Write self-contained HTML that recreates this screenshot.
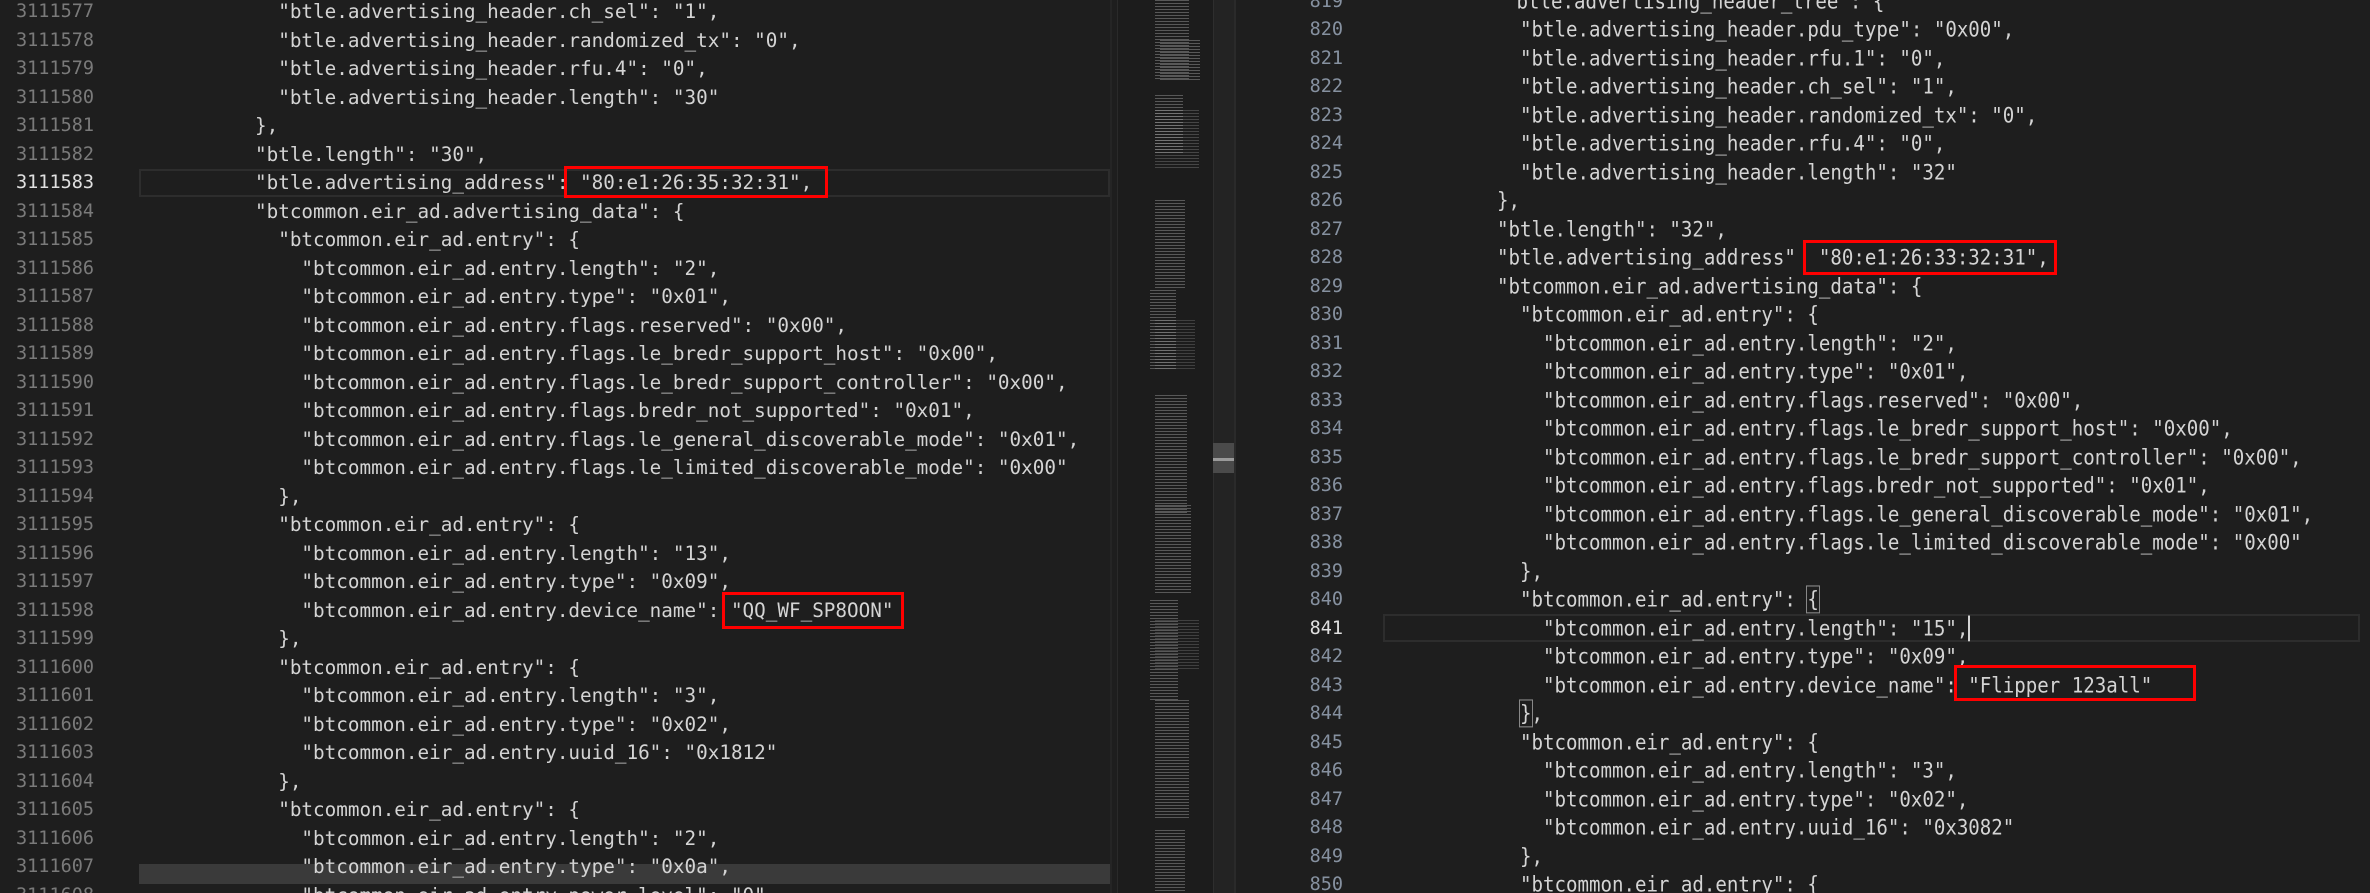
<!DOCTYPE html>
<html><head><meta charset="utf-8"><style>
html,body{margin:0;padding:0;background:#1e1e1e;width:2370px;height:893px;overflow:hidden;position:relative}
.l{position:absolute;height:28.5px;line-height:28.5px;white-space:pre;font-family:"DejaVu Sans Mono","Liberation Mono",monospace;color:#d4d4d4}
.L{font-size:19.3px}
.R{font-size:19.1px;transform:scaleY(1.12);transform-origin:0 50%}
.n{position:absolute;height:28.5px;line-height:28.5px;text-align:right;font-family:"DejaVu Sans Mono","Liberation Mono",monospace;color:#7a7a7a;font-size:18.5px}
.nr{color:#8691a0}
.cur{color:#e0e0e0}
.box{position:absolute;border:3px solid #ff0000;box-sizing:border-box}
.mm{position:absolute;left:1155px;width:40px;background:repeating-linear-gradient(to bottom,rgba(200,200,200,.35) 0 1px,transparent 1px 3px)}
</style></head><body>
<!-- left pane -->
<div style="position:absolute;left:139px;top:169px;width:971px;height:28px;border:2px solid #2d2d2d;box-sizing:border-box"></div>
<div style="position:absolute;left:139px;top:864px;width:971px;height:20px;background:#3a3a3a"></div>
<div style="position:absolute;left:1110px;top:0;width:2px;height:893px;background:#252525"></div>
<div style="position:absolute;left:1117px;top:0;width:96px;height:893px;background:#1c1c1c;border-left:1px solid #2a2a2a"></div>
<div class="mm" style="top:0;height:80px;width:34px"></div>
<div class="mm" style="top:40px;height:40px;left:1160px;width:40px"></div>
<div class="mm" style="top:95px;height:60px;width:28px"></div>
<div class="mm" style="top:110px;height:60px;width:44px;opacity:.7"></div>
<div class="mm" style="top:200px;height:90px;width:30px"></div>
<div class="mm" style="top:290px;height:80px;width:26px;left:1150px"></div>
<div class="mm" style="top:320px;height:50px;width:40px;opacity:.6"></div>
<div class="mm" style="top:395px;height:120px;width:32px"></div>
<div class="mm" style="top:505px;height:90px;width:36px"></div>
<div class="mm" style="top:600px;height:100px;width:28px;left:1150px"></div>
<div class="mm" style="top:620px;height:50px;width:44px;opacity:.6"></div>
<div class="mm" style="top:700px;height:120px;width:34px"></div>
<div class="mm" style="top:830px;height:63px;width:30px"></div>
<div style="position:absolute;left:1213px;top:0;width:21px;height:893px;background:#232323;border-left:1px solid #2e2e2e"></div>
<div style="position:absolute;left:1213px;top:443px;width:21px;height:30px;background:#4a4a4a"></div>
<div style="position:absolute;left:1213px;top:458px;width:21px;height:3px;background:#9a9a9a"></div>
<div style="position:absolute;left:1234px;top:0;width:2px;height:893px;background:#2a2a2a"></div>

<div class="n" style="left:0;width:94px;top:-2px">3111577</div>
<div class="n" style="left:0;width:94px;top:26.5px">3111578</div>
<div class="n" style="left:0;width:94px;top:55px">3111579</div>
<div class="n" style="left:0;width:94px;top:83.5px">3111580</div>
<div class="n" style="left:0;width:94px;top:112px">3111581</div>
<div class="n" style="left:0;width:94px;top:140.5px">3111582</div>
<div class="n cur" style="left:0;width:94px;top:169px">3111583</div>
<div class="n" style="left:0;width:94px;top:197.5px">3111584</div>
<div class="n" style="left:0;width:94px;top:226px">3111585</div>
<div class="n" style="left:0;width:94px;top:254.5px">3111586</div>
<div class="n" style="left:0;width:94px;top:283px">3111587</div>
<div class="n" style="left:0;width:94px;top:311.5px">3111588</div>
<div class="n" style="left:0;width:94px;top:340px">3111589</div>
<div class="n" style="left:0;width:94px;top:368.5px">3111590</div>
<div class="n" style="left:0;width:94px;top:397px">3111591</div>
<div class="n" style="left:0;width:94px;top:425.5px">3111592</div>
<div class="n" style="left:0;width:94px;top:454px">3111593</div>
<div class="n" style="left:0;width:94px;top:482.5px">3111594</div>
<div class="n" style="left:0;width:94px;top:511px">3111595</div>
<div class="n" style="left:0;width:94px;top:539.5px">3111596</div>
<div class="n" style="left:0;width:94px;top:568px">3111597</div>
<div class="n" style="left:0;width:94px;top:596.5px">3111598</div>
<div class="n" style="left:0;width:94px;top:625px">3111599</div>
<div class="n" style="left:0;width:94px;top:653.5px">3111600</div>
<div class="n" style="left:0;width:94px;top:682px">3111601</div>
<div class="n" style="left:0;width:94px;top:710.5px">3111602</div>
<div class="n" style="left:0;width:94px;top:739px">3111603</div>
<div class="n" style="left:0;width:94px;top:767.5px">3111604</div>
<div class="n" style="left:0;width:94px;top:796px">3111605</div>
<div class="n" style="left:0;width:94px;top:824.5px">3111606</div>
<div class="n" style="left:0;width:94px;top:853px">3111607</div>
<div class="n" style="left:0;width:94px;top:881.5px">3111608</div>

<div class="l L" style="left:255px;top:-2px">  "btle.advertising_header.ch_sel": "1",</div>
<div class="l L" style="left:255px;top:26.5px">  "btle.advertising_header.randomized_tx": "0",</div>
<div class="l L" style="left:255px;top:55px">  "btle.advertising_header.rfu.4": "0",</div>
<div class="l L" style="left:255px;top:83.5px">  "btle.advertising_header.length": "30"</div>
<div class="l L" style="left:255px;top:112px">},</div>
<div class="l L" style="left:255px;top:140.5px">"btle.length": "30",</div>
<div class="l L" style="left:255px;top:169px">"btle.advertising_address": "80:e1:26:35:32:31",</div>
<div class="l L" style="left:255px;top:197.5px">"btcommon.eir_ad.advertising_data": {</div>
<div class="l L" style="left:255px;top:226px">  "btcommon.eir_ad.entry": {</div>
<div class="l L" style="left:255px;top:254.5px">    "btcommon.eir_ad.entry.length": "2",</div>
<div class="l L" style="left:255px;top:283px">    "btcommon.eir_ad.entry.type": "0x01",</div>
<div class="l L" style="left:255px;top:311.5px">    "btcommon.eir_ad.entry.flags.reserved": "0x00",</div>
<div class="l L" style="left:255px;top:340px">    "btcommon.eir_ad.entry.flags.le_bredr_support_host": "0x00",</div>
<div class="l L" style="left:255px;top:368.5px">    "btcommon.eir_ad.entry.flags.le_bredr_support_controller": "0x00",</div>
<div class="l L" style="left:255px;top:397px">    "btcommon.eir_ad.entry.flags.bredr_not_supported": "0x01",</div>
<div class="l L" style="left:255px;top:425.5px">    "btcommon.eir_ad.entry.flags.le_general_discoverable_mode": "0x01",</div>
<div class="l L" style="left:255px;top:454px">    "btcommon.eir_ad.entry.flags.le_limited_discoverable_mode": "0x00"</div>
<div class="l L" style="left:255px;top:482.5px">  },</div>
<div class="l L" style="left:255px;top:511px">  "btcommon.eir_ad.entry": {</div>
<div class="l L" style="left:255px;top:539.5px">    "btcommon.eir_ad.entry.length": "13",</div>
<div class="l L" style="left:255px;top:568px">    "btcommon.eir_ad.entry.type": "0x09",</div>
<div class="l L" style="left:255px;top:596.5px">    "btcommon.eir_ad.entry.device_name": "QQ_WF_SP8OON"</div>
<div class="l L" style="left:255px;top:625px">  },</div>
<div class="l L" style="left:255px;top:653.5px">  "btcommon.eir_ad.entry": {</div>
<div class="l L" style="left:255px;top:682px">    "btcommon.eir_ad.entry.length": "3",</div>
<div class="l L" style="left:255px;top:710.5px">    "btcommon.eir_ad.entry.type": "0x02",</div>
<div class="l L" style="left:255px;top:739px">    "btcommon.eir_ad.entry.uuid_16": "0x1812"</div>
<div class="l L" style="left:255px;top:767.5px">  },</div>
<div class="l L" style="left:255px;top:796px">  "btcommon.eir_ad.entry": {</div>
<div class="l L" style="left:255px;top:824.5px">    "btcommon.eir_ad.entry.length": "2",</div>
<div class="l L" style="left:255px;top:853px">    "btcommon.eir_ad.entry.type": "0x0a",</div>
<div class="l L" style="left:255px;top:881.5px">    "btcommon.eir_ad.entry.power_level": "0",</div>

<div class="box" style="left:564px;top:166px;width:264px;height:32px"></div>
<div class="box" style="left:722px;top:592px;width:182px;height:37px"></div>

<!-- right pane -->
<div style="position:absolute;left:1383px;top:614px;width:977px;height:28px;border:2px solid #2d2d2d;box-sizing:border-box"></div>
<div class="n nr" style="left:1250px;width:93px;top:-12.25px">819</div>
<div class="n nr" style="left:1250px;width:93px;top:16.25px">820</div>
<div class="n nr" style="left:1250px;width:93px;top:44.75px">821</div>
<div class="n nr" style="left:1250px;width:93px;top:73.25px">822</div>
<div class="n nr" style="left:1250px;width:93px;top:101.75px">823</div>
<div class="n nr" style="left:1250px;width:93px;top:130.25px">824</div>
<div class="n nr" style="left:1250px;width:93px;top:158.75px">825</div>
<div class="n nr" style="left:1250px;width:93px;top:187.25px">826</div>
<div class="n nr" style="left:1250px;width:93px;top:215.75px">827</div>
<div class="n nr" style="left:1250px;width:93px;top:244.25px">828</div>
<div class="n nr" style="left:1250px;width:93px;top:272.75px">829</div>
<div class="n nr" style="left:1250px;width:93px;top:301.25px">830</div>
<div class="n nr" style="left:1250px;width:93px;top:329.75px">831</div>
<div class="n nr" style="left:1250px;width:93px;top:358.25px">832</div>
<div class="n nr" style="left:1250px;width:93px;top:386.75px">833</div>
<div class="n nr" style="left:1250px;width:93px;top:415.25px">834</div>
<div class="n nr" style="left:1250px;width:93px;top:443.75px">835</div>
<div class="n nr" style="left:1250px;width:93px;top:472.25px">836</div>
<div class="n nr" style="left:1250px;width:93px;top:500.75px">837</div>
<div class="n nr" style="left:1250px;width:93px;top:529.25px">838</div>
<div class="n nr" style="left:1250px;width:93px;top:557.75px">839</div>
<div class="n nr" style="left:1250px;width:93px;top:586.25px">840</div>
<div class="n nr cur" style="left:1250px;width:93px;top:614.75px">841</div>
<div class="n nr" style="left:1250px;width:93px;top:643.25px">842</div>
<div class="n nr" style="left:1250px;width:93px;top:671.75px">843</div>
<div class="n nr" style="left:1250px;width:93px;top:700.25px">844</div>
<div class="n nr" style="left:1250px;width:93px;top:728.75px">845</div>
<div class="n nr" style="left:1250px;width:93px;top:757.25px">846</div>
<div class="n nr" style="left:1250px;width:93px;top:785.75px">847</div>
<div class="n nr" style="left:1250px;width:93px;top:814.25px">848</div>
<div class="n nr" style="left:1250px;width:93px;top:842.75px">849</div>
<div class="n nr" style="left:1250px;width:93px;top:871.25px">850</div>

<div class="l R" style="left:1505px;top:-12.25px">"btle.advertising_header_tree": {</div>
<div class="l R" style="left:1497px;top:16.25px">  "btle.advertising_header.pdu_type": "0x00",</div>
<div class="l R" style="left:1497px;top:44.75px">  "btle.advertising_header.rfu.1": "0",</div>
<div class="l R" style="left:1497px;top:73.25px">  "btle.advertising_header.ch_sel": "1",</div>
<div class="l R" style="left:1497px;top:101.75px">  "btle.advertising_header.randomized_tx": "0",</div>
<div class="l R" style="left:1497px;top:130.25px">  "btle.advertising_header.rfu.4": "0",</div>
<div class="l R" style="left:1497px;top:158.75px">  "btle.advertising_header.length": "32"</div>
<div class="l R" style="left:1497px;top:187.25px">},</div>
<div class="l R" style="left:1497px;top:215.75px">"btle.length": "32",</div>
<div class="l R" style="left:1497px;top:244.25px">"btle.advertising_address"  "80:e1:26:33:32:31",</div>
<div class="l R" style="left:1497px;top:272.75px">"btcommon.eir_ad.advertising_data": {</div>
<div class="l R" style="left:1497px;top:301.25px">  "btcommon.eir_ad.entry": {</div>
<div class="l R" style="left:1497px;top:329.75px">    "btcommon.eir_ad.entry.length": "2",</div>
<div class="l R" style="left:1497px;top:358.25px">    "btcommon.eir_ad.entry.type": "0x01",</div>
<div class="l R" style="left:1497px;top:386.75px">    "btcommon.eir_ad.entry.flags.reserved": "0x00",</div>
<div class="l R" style="left:1497px;top:415.25px">    "btcommon.eir_ad.entry.flags.le_bredr_support_host": "0x00",</div>
<div class="l R" style="left:1497px;top:443.75px">    "btcommon.eir_ad.entry.flags.le_bredr_support_controller": "0x00",</div>
<div class="l R" style="left:1497px;top:472.25px">    "btcommon.eir_ad.entry.flags.bredr_not_supported": "0x01",</div>
<div class="l R" style="left:1497px;top:500.75px">    "btcommon.eir_ad.entry.flags.le_general_discoverable_mode": "0x01",</div>
<div class="l R" style="left:1497px;top:529.25px">    "btcommon.eir_ad.entry.flags.le_limited_discoverable_mode": "0x00"</div>
<div class="l R" style="left:1497px;top:557.75px">  },</div>
<div class="l R" style="left:1497px;top:586.25px">  "btcommon.eir_ad.entry": <span style="outline:1px solid #888">{</span></div>
<div class="l R" style="left:1497px;top:614.75px">    "btcommon.eir_ad.entry.length": "15",<span style="border-left:2px solid #d4d4d4"></span></div>
<div class="l R" style="left:1497px;top:643.25px">    "btcommon.eir_ad.entry.type": "0x09",</div>
<div class="l R" style="left:1497px;top:671.75px">    "btcommon.eir_ad.entry.device_name": "Flipper 123all"</div>
<div class="l R" style="left:1497px;top:700.25px">  <span style="outline:1px solid #888">}</span>,</div>
<div class="l R" style="left:1497px;top:728.75px">  "btcommon.eir_ad.entry": {</div>
<div class="l R" style="left:1497px;top:757.25px">    "btcommon.eir_ad.entry.length": "3",</div>
<div class="l R" style="left:1497px;top:785.75px">    "btcommon.eir_ad.entry.type": "0x02",</div>
<div class="l R" style="left:1497px;top:814.25px">    "btcommon.eir_ad.entry.uuid_16": "0x3082"</div>
<div class="l R" style="left:1497px;top:842.75px">  },</div>
<div class="l R" style="left:1497px;top:871.25px">  "btcommon.eir_ad.entry": {</div>

<div class="box" style="left:1803px;top:240px;width:254px;height:35px"></div>
<div class="box" style="left:1954px;top:665px;width:242px;height:36px"></div>
</body></html>
